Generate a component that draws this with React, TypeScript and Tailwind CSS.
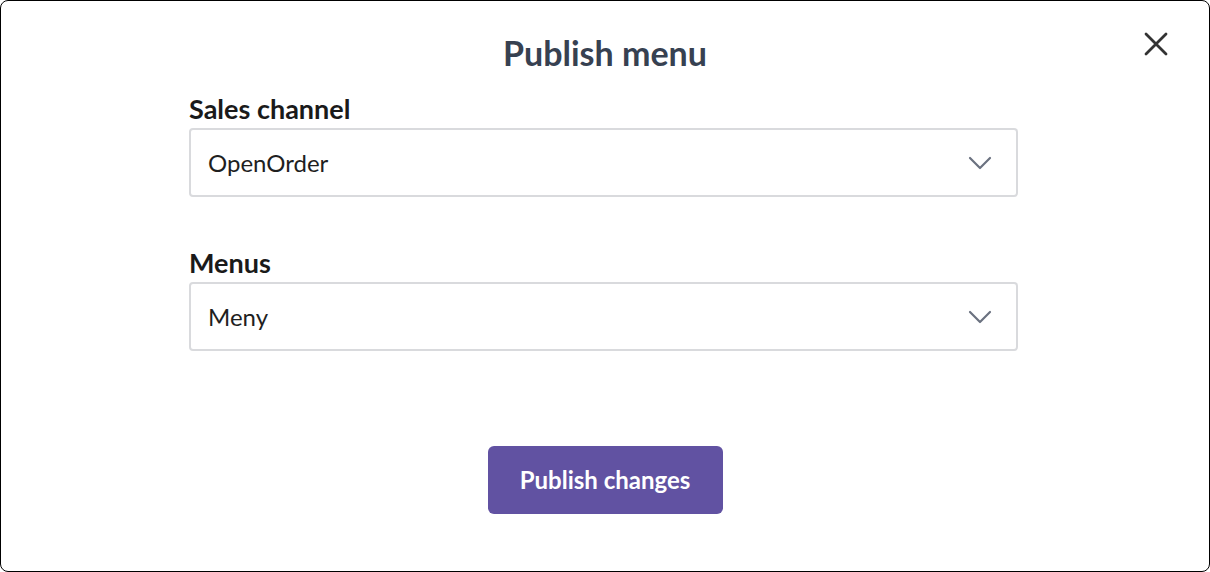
import React from 'react';

const Chevron: React.FC = () => (
    <svg width="24" height="14" viewBox="0 0 24 14" fill="none" className="text-[#6b7280]">
        <path d="M2 2l10 10L22 2" stroke="currentColor" strokeWidth="2.2" strokeLinecap="round" strokeLinejoin="round" />
    </svg>
);

const SelectField: React.FC<{ label: string; value: string; className?: string }> = ({ label, value, className }) => (
    <div className={className}>
        <label className="block text-[27px] leading-[32px] font-bold text-[#1a1a1a] mb-[3px]">{label}</label>
        <div className="flex h-[69px] items-center justify-between rounded border-2 border-[#d9dadd] bg-white pl-[17px] pr-[24px]">
            <span className="text-[24px] text-[#1f1f1f]">{value}</span>
            <Chevron />
        </div>
    </div>
);

export default function App() {
    return (
        <div className="h-[572px] w-[1210px] bg-white" style={{ fontFamily: 'Lato, "Noto Sans", sans-serif' }}>
            <div className="relative h-full rounded-lg border border-black bg-white">
                <button className="absolute right-[41px] top-[31px] text-[#333333]" aria-label="Close">
                    <svg width="24" height="24" viewBox="0 0 24 24" fill="none">
                        <path d="M2 2l20 20M22 2L2 22" stroke="currentColor" strokeWidth="2.8" strokeLinecap="round" />
                    </svg>
                </button>
                <div className="pt-[32px]">
                    <h2 className="text-center text-[34px] leading-[40px] font-bold text-[#374151]">Publish menu</h2>
                    <form className="ml-[188px] mt-[20px] w-[829px]">
                        <SelectField label="Sales channel" value="OpenOrder" />
                        <SelectField label="Menus" value="Meny" className="mt-[50px]" />
                        <div className="mt-[95px] flex justify-center pl-[3px]">
                            <button type="button" className="h-[68px] w-[235px] rounded-md bg-[#6152a2] text-[24px] font-bold text-white">
                                Publish changes
                            </button>
                        </div>
                    </form>
                </div>
            </div>
        </div>
    );
}
